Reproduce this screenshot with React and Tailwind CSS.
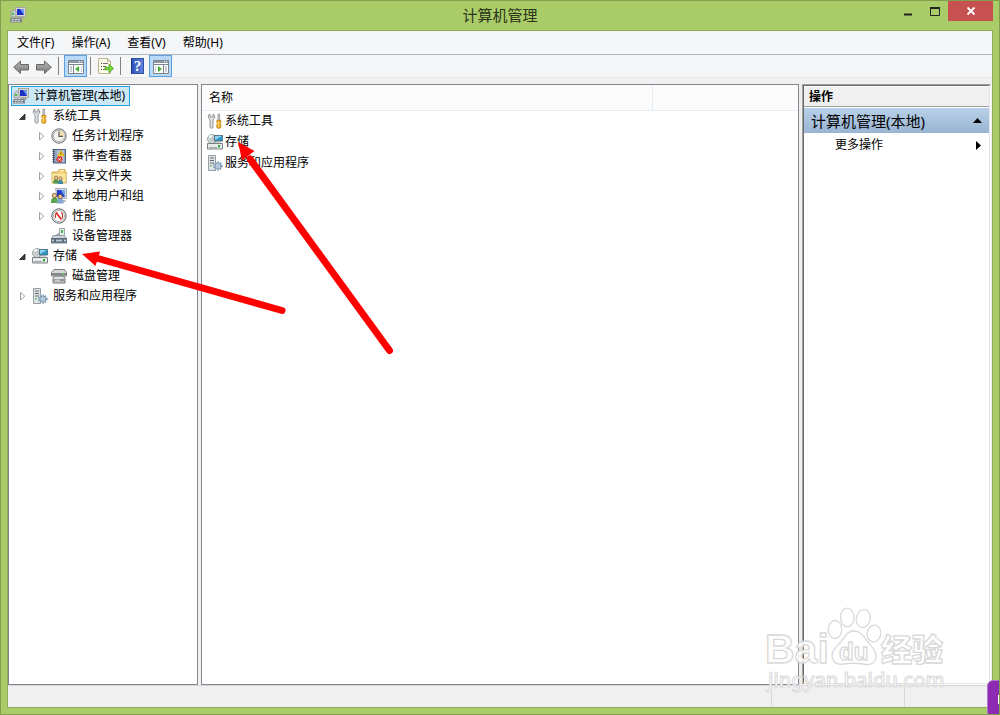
import React from "react";

function Svg({ children, className = "" }) {
  return (
    <svg width="16" height="16" viewBox="0 0 16 16" className={`shrink-0 ${className}`} aria-hidden="true">
      {children}
    </svg>
  );
}

function ComputerIcon() {
  return (
    <Svg>
      <rect x="5.500" y="0.500" width="10" height="9" fill="#d9d6cc" stroke="#a9a9a4" />
      <rect x="7" y="2" width="7" height="6" fill="#1c2fc4" />
      <path d="M10 2h4v6z" fill="#6f9cf0" />
      <path d="M1 5l3-2 2 1v6H1z" fill="#c8cbd0" stroke="#8e9196" strokeWidth=".7" />
      <rect x="2" y="6" width="2" height="2" fill="#3fc43f" />
      <path d="M8 10h5l1 2H7z" fill="#9ea2a8" />
      <path d="M1 11h10l1 2v2.500H0V13z" fill="#7d838a" />
      <path d="M2 12.500h8M1.500 14.300h9" stroke="#e2e4e6" strokeDasharray="2 1" />
    </Svg>
  );
}

function ToolsIcon() {
  return (
    <Svg>
      <path d="M3 1Q1 2 1.200 4.200 1.500 5.500 3 6.500V14.500q1.500 1.500 3 0V6.500Q7.800 5.500 7.900 4.200 8 2 6 1V4H3z" fill="#e2e4e5" stroke="#85898c" strokeWidth=".9" />
      <path d="M11 1h1.500l.3 6h-2z" fill="#c9ccce" stroke="#8b8f92" strokeWidth=".7" />
      <path d="M9.800 7.500h4v2l-.8 1 .8 1v3q-2 1.800-4 0v-3l.8-1-.8-1z" fill="#f0ae1c" stroke="#c07c10" strokeWidth=".8" />
      <path d="M11.300 8v6" stroke="#ffe28a" />
    </Svg>
  );
}

function ClockIcon() {
  return (
    <Svg>
      <circle cx="8" cy="8" r="7.200" fill="#d8d9dc" stroke="#73777c" />
      <circle cx="8" cy="8" r="5.600" fill="#f5f3ea" stroke="#a5a8ac" strokeWidth=".8" />
      <path d="M8 8V2.500A5.500 5.500 0 0113.500 8z" fill="#f6dfb4" />
      <path d="M8 3.500V8.300h4" fill="none" stroke="#555c63" strokeWidth="1.200" />
    </Svg>
  );
}

function EventIcon() {
  return (
    <Svg>
      <rect x="2.500" y="1.500" width="12" height="13.500" fill="#8fa3c4" stroke="#4f6284" />
      <path d="M6 3h7M6 5h7M6 7h7M6 9h7M6 11h7M6 13h7" stroke="#dbe4f2" />
      <path d="M2.500 1v14" stroke="#3f4956" strokeWidth="2" strokeDasharray="1 1" />
      <path d="M10 2.500l3.500 5.500h-7z" fill="#ffd42a" stroke="#c99a0e" strokeWidth=".6" />
      <path d="M10 4.500v2" stroke="#4b3c00" />
      <circle cx="8.500" cy="11.300" r="3" fill="#d8392c" />
      <path d="M7.300 10.100l2.400 2.400m0-2.400l-2.400 2.400" stroke="#fff" />
    </Svg>
  );
}

function People({ shirtLeft, shirtRight }) {
  return (
    <>
      <path d="M1 14q0-4 3.500-4T8 14v1.500H1z" fill={shirtLeft} />
      <circle cx="4.500" cy="8" r="2.200" fill="#ecc596" stroke="#76522b" strokeWidth=".8" />
      <path d="M7 15q0-4 3.200-4T13.500 15v1H7z" fill={shirtRight} />
      <circle cx="10.200" cy="9" r="2.100" fill="#efca9f" stroke="#6c4825" strokeWidth=".8" />
    </>
  );
}

function SharedIcon() {
  return (
    <Svg>
      <path d="M1 4h6l1-2.500h6V4h1.200v11H1z" fill="#f2d478" stroke="#c8a043" strokeWidth=".8" />
      <path d="M1.500 6h13v8.500h-13z" fill="#fae69c" />
      <path d="M9.500 2.500h3" stroke="#fff" />
      <g transform="translate(1.500 3.500) scale(.78)">
        <People shirtLeft="#4f9a4c" shirtRight="#3f8aa8" />
      </g>
    </Svg>
  );
}

function UsersIcon() {
  return (
    <Svg>
      <path d="M4.500 .5h11v10h-9z" fill="#d5dae0" stroke="#9ba2a9" strokeWidth=".8" />
      <path d="M6 2h8v7H6z" fill="#2442c9" />
      <path d="M10 2h4v7z" fill="#7ba4ee" />
      <path d="M10 12h4l1 2h-6z" fill="#b3b8bd" />
      <g transform="translate(-1 -.5)">
        <People shirtLeft="#5da450" shirtRight="#7fa6cf" />
      </g>
    </Svg>
  );
}

function PerformanceIcon() {
  return (
    <Svg>
      <circle cx="8" cy="8" r="7.200" fill="#e7e7e7" stroke="#63676b" />
      <circle cx="8" cy="8" r="5.600" fill="#fff" stroke="#9b9ea1" strokeWidth=".7" />
      <path d="M4.500 10V6.500L6 4.500M11.500 10.500V6L10 4.300" fill="none" stroke="#c2382e" strokeWidth="1.100" />
      <path d="M5 4.500l5.500 7" stroke="#e0281c" strokeWidth="1.700" />
    </Svg>
  );
}

function DeviceIcon() {
  return (
    <Svg>
      <path d="M8.500 .5h5v8h-5z" fill="#e9ecee" stroke="#8d9297" strokeWidth=".8" />
      <rect x="10" y="2" width="2" height="3" fill="#41b64a" />
      <path d="M3 8l5-3.500V8z" fill="#a8adb2" />
      <path d="M2 7.500h11.500l2 3H.5z" fill="#cdd3d8" stroke="#7e858b" strokeWidth=".7" />
      <path d="M.5 10.500h15v4.500H.5z" fill="#7f8e9c" stroke="#525f6a" strokeWidth=".8" />
      <path d="M1 12.500h14" stroke="#c3ccd4" />
      <path d="M4 11.500v2M12 11.500v2" stroke="#35404a" strokeWidth="1.500" />
    </Svg>
  );
}

function StorageIcon() {
  return (
    <Svg>
      <path d="M1 9.500L3 7h10l2 2.500z" fill="#d3d7d7" />
      <circle cx="5" cy="5" r="4.500" fill="#cfd7d8" stroke="#8b9495" strokeWidth=".8" />
      <path d="M5 5L1.500 2.500A4.500 4.500 0 015 .8z" fill="#f4f8f8" />
      <circle cx="5" cy="5" r="1.300" fill="#fff" stroke="#7d8788" strokeWidth=".6" />
      <rect x="7.500" y="1.500" width="8" height="5.500" fill="#2d98c8" stroke="#4d6773" strokeWidth=".8" />
      <path d="M8 2h7L8 6z" fill="#8fd4ef" />
      <path d="M.5 9.500h15V15H.5z" fill="#e7eaea" stroke="#6d7576" strokeWidth=".9" />
      <path d="M2 13.500h8" stroke="#a2a9aa" />
      <rect x="11" y="11" width="2" height="2.500" fill="#2eae35" />
    </Svg>
  );
}

function DiskIcon() {
  return (
    <Svg>
      <path d="M3 1.500h10.500l2 3v3.500H.5V4.500z" fill="#d5d7d8" stroke="#6d7173" strokeWidth=".9" />
      <path d="M1 5h14v2H1z" fill="#85898b" />
      <path d="M3.500 8h9l1.500 2.500v4.500H2v-4.500z" fill="#dee0e0" stroke="#64686a" strokeWidth=".9" />
      <path d="M2.500 11h11v2.500h-11z" fill="#8e9293" />
      <path d="M4 12.200h5" stroke="#e9ebeb" />
      <rect x="11" y="5" width="2" height="1.500" fill="#5dc25c" />
    </Svg>
  );
}

function ServicesIcon() {
  return (
    <Svg>
      <path d="M1.500 .5h7v15h-7z" fill="#dfe3e5" stroke="#8e9598" strokeWidth=".9" />
      <path d="M3 3h4M3 5.500h4M3 8h4" stroke="#646c70" />
      <rect x="3" y="10" width="1.500" height="1.500" fill="#4dba4d" />
      <circle cx="10.800" cy="11" r="3.900" fill="none" stroke="#7f9db6" strokeWidth="1.800" strokeDasharray="1.500 1" />
      <circle cx="10.800" cy="11" r="2.900" fill="#c3d6e6" stroke="#7593ac" strokeWidth=".9" />
      <circle cx="10.800" cy="11" r="1.100" fill="#fff" stroke="#7593ac" strokeWidth=".6" />
    </Svg>
  );
}

function ArrowIcon({ flip }) {
  const id = flip ? "navR" : "navL";
  return (
    <Svg>
      <defs>
        <linearGradient id={id} x1="0" y1="0" x2="0" y2="1">
          <stop offset="0" stopColor="#bababa" />
          <stop offset="1" stopColor="#767676" />
        </linearGradient>
      </defs>
      <path
        d="M.7 9.300L7.500 3V6.500h8v5.500h-8v3.500z"
        transform={flip ? "matrix(-1 0 0 1 16 0)" : undefined}
        fill={`url(#${id})`}
        stroke="#686868"
      />
    </Svg>
  );
}

function PaneIcon({ flip }) {
  return (
    <Svg>
      <path d="M.5 2.500h15v13H.5z" fill="#fff" stroke="#7b8590" />
      <path d="M1 4h14" stroke="#8d98a4" strokeWidth="2" />
      <path d="M11 3.500h1M13 3.500h1" stroke="#fff" />
      <path d="M1 6.500h14" stroke="#7b8590" />
      {flip ? (
        <>
          <path d="M10.500 7v8" stroke="#7b8590" />
          <path d="M12 9h2M12 11h2M12 13h2M2 9h1M2 11h1M2 13h1" stroke="#929ca7" />
          <path d="M5 8v6l4-3z" fill="#3fae2c" />
        </>
      ) : (
        <>
          <path d="M5.500 7v8" stroke="#7b8590" />
          <path d="M2 9h2M2 11h2M2 13h2M13 9h1M13 11h1M13 13h1" stroke="#929ca7" />
          <path d="M11 8v6l-4-3z" fill="#3fae2c" />
        </>
      )}
    </Svg>
  );
}

function ExportIcon() {
  return (
    <Svg>
      <path d="M.5 .5h9l3 3v12H.5z" fill="#fdfbe8" stroke="#bdb593" />
      <path d="M9.500 .5v3h3" fill="none" stroke="#bdb593" />
      <path d="M5 5.500h5M5 8.500h3M5 11.500h3" stroke="#6f6f6f" />
      <path d="M3 5.500h1M3 8.500h1M3 11.500h1" stroke="#444" />
      <path d="M7 9.300h4V6.200l4.600 4.300-4.600 4.300v-3.100H7z" fill="#76d63c" stroke="#4da51f" strokeWidth=".8" />
    </Svg>
  );
}

function HelpIcon() {
  return (
    <span className="flex h-4 w-[13px] items-center justify-center border border-[#3451a3] border-l-[#1d3784] bg-linear-to-r from-[#2f52b8] to-[#5f83dc] font-['Liberation_Serif',serif] text-[15px] leading-none font-bold text-white">
      ?
    </span>
  );
}

function Expander({ state }) {
  if (!state) return <span className="w-3 shrink-0" />;
  return (
    <svg width="12" height="12" viewBox="0 0 12 12" className="shrink-0" aria-hidden="true">
      {state === "open" ? (
        <path d="M9 4V9.500H3.500z" fill="#3a3a3a" stroke="#222" strokeWidth=".8" />
      ) : (
        <path d="M4.500 2.500v7.500L8.800 6.200z" fill="#fff" stroke="#a0a0a0" />
      )}
    </svg>
  );
}

function TreeRow({ icon: Icon, label, state, indent }) {
  return (
    <button type="button" className={`flex h-5 w-full items-center text-left ${indent}`}>
      <Expander state={state} />
      <span className="w-1 shrink-0" />
      <Icon />
      <span className="pb-px pl-[5px] whitespace-nowrap">{label}</span>
    </button>
  );
}

const systemTools = [
  { label: "任务计划程序", icon: ClockIcon, state: "closed" },
  { label: "事件查看器", icon: EventIcon, state: "closed" },
  { label: "共享文件夹", icon: SharedIcon, state: "closed" },
  { label: "本地用户和组", icon: UsersIcon, state: "closed" },
  { label: "性能", icon: PerformanceIcon, state: "closed" },
  { label: "设备管理器", icon: DeviceIcon },
];

const items = [
  { label: "系统工具", icon: ToolsIcon },
  { label: "存储", icon: StorageIcon },
  { label: "服务和应用程序", icon: ServicesIcon },
];

function TitleBar() {
  return (
    <header className="grid h-[29px] shrink-0 grid-cols-[1fr_auto_1fr] items-start">
      <div className="pt-[6px] pl-[9px]">
        <ComputerIcon />
      </div>
      <h1 className="pt-1 text-[15px] leading-5 text-[#2b331a]">计算机管理</h1>
      <div className="flex justify-end pr-[6px]">
        <button type="button" aria-label="最小化" className="flex h-5 w-[27px] items-center justify-center">
          <svg width="12" height="12" aria-hidden="true"><path d="M2 9.500h8" stroke="#222" strokeWidth="2" /></svg>
        </button>
        <button type="button" aria-label="最大化" className="flex h-5 w-[27px] items-center justify-center">
          <svg width="12" height="12" aria-hidden="true">
            <path d="M1.500 2.500h9v8h-9z" fill="none" stroke="#222" />
            <path d="M1 3h10" stroke="#222" strokeWidth="2" />
          </svg>
        </button>
        <button type="button" aria-label="关闭" className="flex h-5 w-[45px] items-center justify-center bg-[#c75050]">
          <svg width="10" height="10" aria-hidden="true"><path d="M1.500 1.500l7 7m0-7l-7 7" stroke="#fff" strokeWidth="1.800" /></svg>
        </button>
      </div>
    </header>
  );
}

function ToolButton({ label, active, children }) {
  return (
    <button
      type="button"
      aria-label={label}
      className={`flex h-[22px] w-[23px] items-center justify-center border ${active ? "border-[#5aa1e3] bg-[#b9d9f8]" : "border-transparent"}`}
    >
      {children}
    </button>
  );
}

function Separator({ spacing }) {
  return <span className={`h-[18px] w-px bg-[#808080] ${spacing}`} />;
}

function Toolbar() {
  return (
    <div className="flex h-[23px] shrink-0 items-center border-b border-[#e6e7e8] bg-[#f5f6f8] pl-px">
      <ToolButton label="后退"><ArrowIcon /></ToolButton>
      <ToolButton label="前进"><ArrowIcon flip /></ToolButton>
      <Separator spacing="mr-[5px] ml-[3px]" />
      <ToolButton label="显示/隐藏控制台树" active><PaneIcon /></ToolButton>
      <Separator spacing="mx-[3px]" />
      <ToolButton label="导出列表"><ExportIcon /></ToolButton>
      <Separator spacing="mr-[5px] ml-[3px]" />
      <ToolButton label="帮助"><HelpIcon /></ToolButton>
      <ToolButton label="显示/隐藏操作窗格" active><PaneIcon flip /></ToolButton>
    </div>
  );
}

function Tree() {
  return (
    <nav aria-label="控制台树" className="w-[190px] shrink-0 border border-[#82858f] bg-white pt-px">
      <button type="button" className="ml-[2px] flex h-5 items-center border border-[#26a0da] bg-[#cbe8f6] pr-1 pl-px">
        <ComputerIcon />
        <span className="pb-px pl-[5px]">计算机管理(本地)</span>
      </button>
      <TreeRow icon={ToolsIcon} label="系统工具" state="open" indent="pl-[7px]" />
      {systemTools.map((t) => (
        <TreeRow key={t.label} {...t} indent="pl-[26px]" />
      ))}
      <TreeRow icon={StorageIcon} label="存储" state="open" indent="pl-[7px]" />
      <TreeRow icon={DiskIcon} label="磁盘管理" indent="pl-[26px]" />
      <TreeRow icon={ServicesIcon} label="服务和应用程序" state="closed" indent="pl-[7px]" />
    </nav>
  );
}

function List() {
  return (
    <main className="min-w-0 flex-1 border border-[#82858f] bg-white">
      <table className="w-full table-fixed border-collapse text-left">
        <thead>
          <tr className="h-[25px] border-b border-[#e3eef8] bg-[#fcfcfd]">
            <th className="border-r border-[#e3eef8] pt-[2px] pl-[7px] font-normal">名称</th>
            <td className="w-[146px]" />
          </tr>
        </thead>
        <tbody>
          {items.map(({ label, icon: Icon }) => (
            <tr key={label} className="h-[21px]">
              <td className="p-0 pl-[5px]">
                <span className="flex items-center gap-[2px]">
                  <Icon />
                  {label}
                </span>
              </td>
              <td />
            </tr>
          ))}
        </tbody>
      </table>
    </main>
  );
}

function Actions() {
  return (
    <aside className="w-[189px] shrink-0 border border-t-[#a0a0a0] border-r-white border-b-white border-l-[#a0a0a0]">
      <div className="h-full border border-t-[#696969] border-r-[#e3e3e3] border-b-[#e3e3e3] border-l-[#696969] bg-white pt-px">
        <h2 className="h-5 border-b border-[#a0a0a0] bg-[#f0f0f0] pl-[5px] leading-5 font-bold">操作</h2>
        <button
          type="button"
          className="mt-px flex h-[25px] w-full items-center justify-between bg-linear-to-b from-[#b9d1ea] to-[#99b4d1] px-[7px] text-[15px]"
        >
          计算机管理(本地)
          <svg width="9" height="5" aria-hidden="true"><path d="M0 5L4.500 0 9 5z" /></svg>
        </button>
        <button type="button" className="flex h-6 w-full items-center justify-between pr-[8px] pl-[31px]">
          更多操作
          <svg width="5" height="9" aria-hidden="true"><path d="M0 0l5 4.500L0 9z" /></svg>
        </button>
      </div>
    </aside>
  );
}

function StatusBar() {
  return (
    <footer className="flex h-[22px] shrink-0 justify-end border-t border-[#d7d7d7] bg-[#f0f0f0] pt-px">
      <span className="w-[133px] border-l border-[#d7d7d7]" />
      <span className="w-[88px] border-l border-[#d7d7d7]" />
    </footer>
  );
}

function Annotations() {
  return (
    <svg width="400" height="360" viewBox="1 1 400 360" className="pointer-events-none absolute top-0 left-0" aria-hidden="true">
      <g stroke="#fe0000" strokeWidth="7" strokeLinecap="round">
        <path d="M98 258.500L282 310.500" />
        <path d="M250 159L389.500 350.500" />
      </g>
      <path d="M82 254l18-2.500-4.500 14.500z" fill="#fe0000" />
      <path d="M238 142l16.500 9-12.500 9.500z" fill="#fe0000" />
    </svg>
  );
}

function Watermark() {
  return (
    <svg width="190" height="92" viewBox="0 0 190 92" className="pointer-events-none absolute right-[46px] bottom-[19px]" role="img" aria-label="Baidu 经验">
      <g fill="#ffffff" fillOpacity=".85" stroke="#d9d9d9" strokeWidth="1.300">
        <text x="2" y="60" fontSize="41" fontWeight="700" fontFamily="'Liberation Sans', Arial, sans-serif">Bai</text>
        <ellipse cx="72" cy="26.500" rx="6.800" ry="9" />
        <ellipse cx="84.300" cy="14.500" rx="6.800" ry="9.300" />
        <ellipse cx="100.300" cy="15.500" rx="7" ry="9" transform="rotate(12 100.300 15.500)" />
        <ellipse cx="111" cy="30.500" rx="6.800" ry="8.500" transform="rotate(10 111 30.500)" />
        <path d="M91 28c-7 0-10 6-13 11-4 4-8 6-9 13 0 8 6 10 11 9 7-1 14-1 20 0 8 2 13-1 13-9-1-6-5-9-8-13-4-5-7-11-14-11z" />
        <text x="76" y="57" fontSize="24" fontWeight="700" fontFamily="'Liberation Sans', Arial, sans-serif">du</text>
        <text x="118" y="58" fontSize="31" fontWeight="900" fontFamily="'Noto Sans CJK SC', sans-serif">经验</text>
        <text x="5" y="84" fontSize="20" fontWeight="500" strokeWidth="1" fontFamily="'Noto Sans', sans-serif">jingyan.baidu.com</text>
      </g>
    </svg>
  );
}

export default function App() {
  return (
    <div className="relative flex h-screen flex-col overflow-hidden border border-[#839e4d] bg-[#a9cc68] px-[6px] pb-[6px] font-['Noto_Sans','Noto_Sans_CJK_SC',sans-serif] text-[12px] leading-4 text-black">
      <div className="-mx-[6px]">
        <TitleBar />
      </div>
      <div className="flex min-h-0 flex-1 flex-col border border-[#8fac57] bg-[#f0f0f0]">
        <div role="menubar" className="flex h-6 shrink-0 items-center gap-[17px] border-b border-[#b4b5b8] bg-[#f5f6f8] pl-[9px]">
          {["文件(F)", "操作(A)", "查看(V)", "帮助(H)"].map((m) => (
            <button key={m} type="button" role="menuitem">{m}</button>
          ))}
        </div>
        <Toolbar />
        <div className="flex min-h-0 flex-1 gap-[3px] pt-[6px] pr-px">
          <Tree />
          <List />
          <Actions />
        </div>
        <StatusBar />
      </div>
      <Annotations />
      <Watermark />
      <div className="absolute -right-3 -bottom-1 flex h-[38px] w-6 items-center rounded-md border border-[#b273cc] bg-[#8d2bb2] pl-[10px]">
        <span className="h-[9px] w-2 bg-white" />
      </div>
    </div>
  );
}
